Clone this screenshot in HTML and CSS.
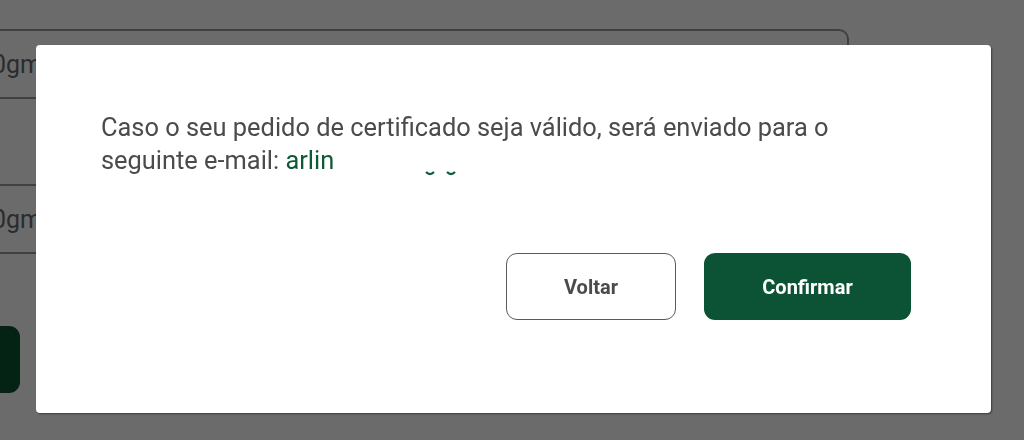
FILE: index.html
```html
<!DOCTYPE html>
<html lang="pt-BR">
<head>
<meta charset="utf-8">
<title>Certificado</title>
<link rel="stylesheet" href="styles.css">
</head>
<body>
<main class="page">
  <form class="form">
    <div class="field">0gmail.com</div>
    <div class="label-gap"></div>
    <div class="field">0gmail.com</div>
    <div class="submit"></div>
  </form>
</main>
<div class="overlay"></div>
<div class="modal" role="dialog">
  <p class="message">Caso o seu pedido de certificado seja válido, será enviado para o seguinte e-mail: <span class="email">arlin</span><span class="redacted"><svg width="40" height="8" viewBox="0 0 40 8"><path d="M9 2 Q13 6 17 2" fill="none" stroke="#0f5a36" stroke-width="2.2"/><path d="M30 2 Q34 6 38 2" fill="none" stroke="#0f5a36" stroke-width="2.2"/></svg></span></p>
  <div class="actions">
    <button class="btn btn-back" type="button">Voltar</button>
    <button class="btn btn-confirm" type="button">Confirmar</button>
  </div>
</div>
</body>
</html>
```
FILE: styles.css
```css
html, body {
  margin: 0;
  padding: 0;
  height: 100%;
  overflow: hidden;
  background: #ffffff;
  font-family: Roboto, "Liberation Sans", Arial, sans-serif;
}

.page {
  width: 1024px;
  height: 440px;
}

.form {
  width: 909px;
  margin-left: -60px;
  padding-top: 29px;
  display: flex;
  flex-direction: column;
}

.field {
  box-sizing: border-box;
  height: 70px;
  border: 2px solid #9a9a9a;
  border-radius: 10px;
  padding-left: 50px;
  display: flex;
  align-items: center;
  font-size: 25px;
  color: #6a6a6a;
}

.label-gap {
  height: 85px;
}

.submit {
  margin-top: 72px;
  width: 80px;
  height: 67px;
  border-radius: 11px;
  background: #0b5334;
}

.overlay {
  position: fixed;
  inset: 0;
  background: rgba(0, 0, 0, 0.58);
}

.modal {
  position: fixed;
  left: 36px;
  top: 45px;
  width: 955px;
  height: 368px;
  box-sizing: border-box;
  background: #ffffff;
  border-radius: 4px;
  box-shadow: 1px 1px 2px rgba(0, 0, 0, 0.45);
  padding: 66px 80px 0 65px;
  display: flex;
  flex-direction: column;
}

.message {
  margin: 0;
  max-width: 770px;
  font-size: 25.4px;
  line-height: 33px;
  color: #4b4b4b;
}

.email {
  color: #0f5a36;
}

.redacted {
  display: inline-block;
  width: 130px;
  height: 1px;
  position: relative;
}

.redacted svg {
  position: absolute;
  left: 83px;
  top: 2px;
}

.actions {
  margin-top: 76px;
  display: flex;
  justify-content: flex-end;
  gap: 28px;
}

.btn {
  height: 67px;
  border-radius: 11px;
  font-family: Roboto, "Liberation Sans", Arial, sans-serif;
  font-size: 20px;
  font-weight: 700;
  cursor: pointer;
}

.btn-back {
  width: 170px;
  background: #ffffff;
  border: 1.5px solid #5a5a5a;
  color: #4b4b4b;
}

.btn-confirm {
  width: 207px;
  background: #0b5334;
  border: none;
  color: #ffffff;
}
```
